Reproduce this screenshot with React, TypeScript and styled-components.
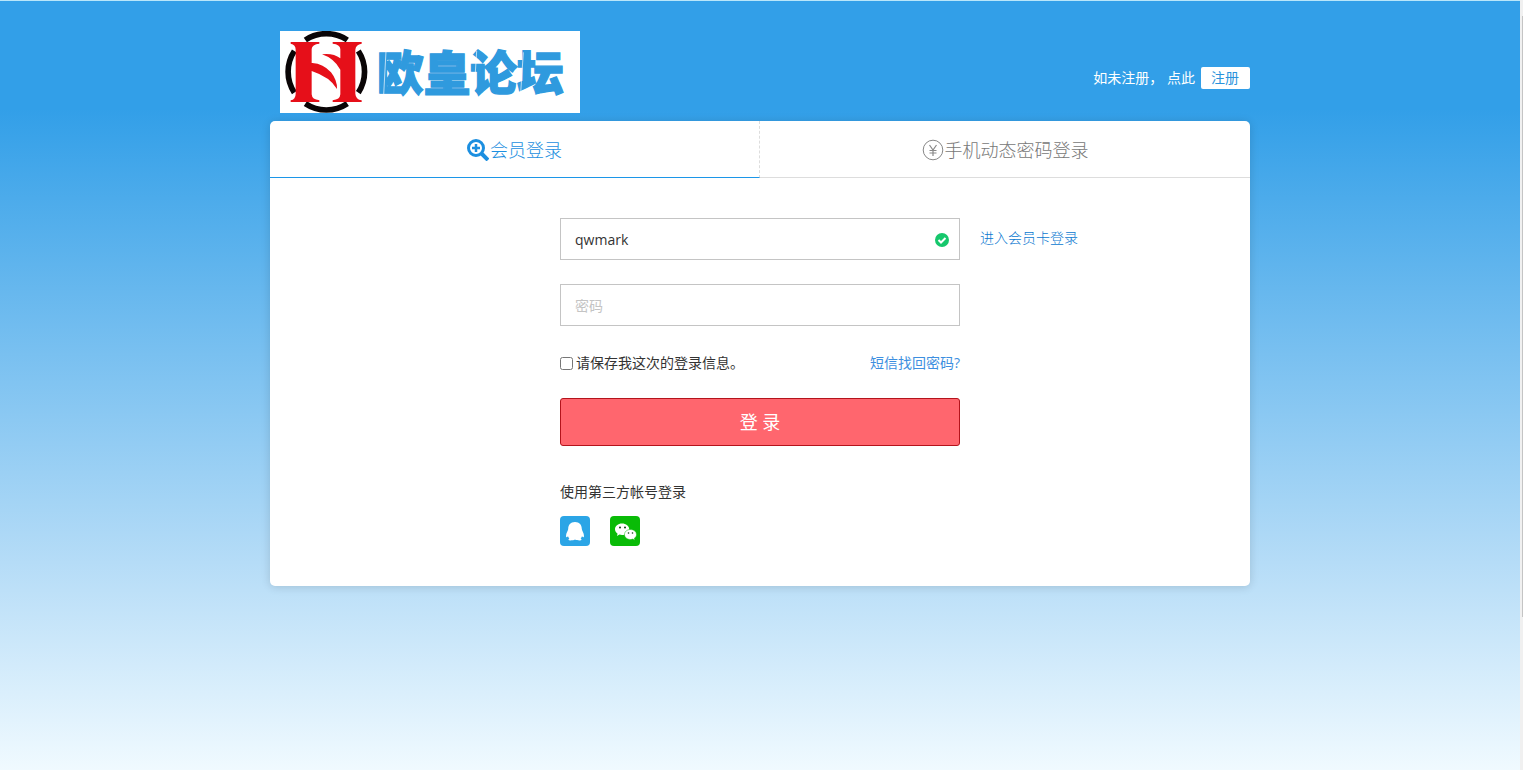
import React from "react";
import styled, { createGlobalStyle } from "styled-components";

const GlobalStyle = createGlobalStyle`
  *, *::before, *::after { box-sizing: border-box; }
  body {
    margin: 0;
    color: #333;
    font: 14px/20px "Open Sans", "Noto Sans CJK SC", sans-serif;
  }
  a { text-decoration: none; }
  input, button { font: inherit; }
`;

const Page = styled.div`
  display: flex;
  min-height: 100vh;
`;

const Backdrop = styled.main`
  flex: 1;
  min-width: 0;
  border-top: 1px solid #b9e6fa;
  background: linear-gradient(#329fe8 0%, #329fe8 14%, #b5dcf7 73%, #f0faff 100%);
`;

const ScrollRail = styled.div`
  width: 3px;
  padding: 16px 0 0 2px;
  background: #f0f0f0;
`;

const ScrollThumb = styled.div`
  height: 78vh;
  background: #c4c4c4;
`;

const Container = styled.div`
  max-width: 980px;
  margin: 0 auto;
`;

const Header = styled.header`
  display: flex;
  justify-content: space-between;
  align-items: center;
  padding: 30px 0 8px 10px;
`;

const Logo = styled.svg`
  display: block;
  width: 300px;
  height: 82px;
  background: #fff;
`;

const RegisterHint = styled.div`
  display: flex;
  align-items: center;
  gap: 6px;
  padding-top: 12px;
  color: #fff;
`;

const RegisterLink = styled.a`
  padding: 0 11px 0 10px;
  border-radius: 2px;
  background: #fff;
  color: #2a93dc;
  line-height: 22px;
`;

const Card = styled.section`
  border-radius: 5px;
  background: #fff;
  box-shadow: 0 1px 10px rgba(0, 0, 0, 0.14);
`;

const Tabs = styled.div`
  display: grid;
  grid-template-columns: 1fr 1fr;
`;

const Tab = styled.button<{ $active?: boolean }>`
  display: flex;
  justify-content: center;
  align-items: center;
  gap: 1px;
  height: 57px;
  padding: 2px 0 0;
  border: 0;
  border-right: ${(p) => (p.$active ? "1px dashed #ddd" : "0")};
  border-bottom: 1px solid ${(p) => (p.$active ? "#1c96e8" : "#ddd")};
  background: none;
  color: ${(p) => (p.$active ? "#1c8fe0" : "#777")};
  font-size: 18px;
  font-weight: 300;
  line-height: 24px;
`;

const Body = styled.div`
  display: grid;
  grid-template-columns: 1fr 400px 1fr;
  padding: 40px 0;
`;

const Form = styled.form`
  grid-column: 2;
  display: flex;
  flex-direction: column;
`;

const Field = styled.div`
  position: relative;
  margin-bottom: 24px;
`;

const TextInput = styled.input`
  display: block;
  width: 100%;
  height: 42px;
  padding: 0 40px 0 14px;
  border: 1px solid #c4c4c4;
  background: #fff;
  color: #333;
  outline: 0;
  &::placeholder { color: #c4c4c4; }
`;

const ValidMark = styled.svg`
  position: absolute;
  top: 15px;
  right: 11px;
`;

const CardLink = styled.a`
  justify-self: start;
  align-self: start;
  margin: 10px 0 0 20px;
  color: #0a78d0;
  font-weight: 300;
`;

const Options = styled.div`
  display: flex;
  justify-content: space-between;
  margin: 3px 0 25px;
`;

const Remember = styled.label`
  display: flex;
  align-items: center;
  gap: 3px;
`;

const Checkbox = styled.input`
  width: 13px;
  height: 13px;
  margin: 0;
`;

const ForgotLink = styled.a`
  color: #3d8fe0;
`;

const Submit = styled.button`
  height: 48px;
  border: 1px solid #b4141c;
  border-radius: 3px;
  background: #ff666e;
  color: #fff;
  font-size: 18px;
`;

const PartnerTitle = styled.div`
  margin: 36px 0 14px;
`;

const Partners = styled.div`
  display: flex;
  gap: 20px;
`;

const Partner = styled.a<{ $color: string }>`
  display: block;
  width: 30px;
  height: 30px;
  border-radius: 4px;
  background: ${(p) => p.$color};
  svg { display: block; }
`;

const SiteLogo = () => (
  <Logo viewBox="0 0 900 246" role="img" aria-label="欧皇论坛">
    <g fill="none" stroke="#0a0506" strokeWidth="17">
      <path d="M76 27A114 114 0 0 1 202 27" />
      <path d="M76 218A114 114 0 0 0 202 218" />
      <path d="M43 60A114 114 0 0 0 43 185" />
      <path d="M235 60A114 114 0 0 1 235 185" />
    </g>
    <g fill="#e60f19">
      <path d="M32 33H118V38Q96 40 95 54V106Q90 94 97 96Q130 98 153 124Q172 148 171 174Q150 138 95 120V190Q96 206 118 208V213H32V208Q47 205 47 188V56Q47 41 32 38Z" />
      <path d="M158 33H245V38Q227 41 226 56V188Q227 205 245 208V213H158V208Q180 206 181 190V116Q162 82 126 70Q160 66 181 82V54Q180 40 158 38Z" />
    </g>
    <text x="291" y="177" fill="#2f9ade" stroke="#2f9ade" strokeWidth="4" fontSize="140" fontWeight="900" fontFamily='"Noto Sans CJK SC", sans-serif'>欧皇论坛</text>
    <path d="M318 60L311 192M590 60L582 188M730 64L722 186" fill="none" stroke="#fff" strokeWidth="2" />
  </Logo>
);

const ZoomIcon = () => (
  <svg width="22" height="22" viewBox="0 0 22 22" fill="none" stroke="#1c8fe0" strokeWidth="3" aria-hidden="true">
    <circle cx="9" cy="9" r="7.500" />
    <path d="M14 14l7 7" strokeWidth="4" />
    <path d="M5 9h8M9 5v8" strokeWidth="2.500" />
  </svg>
);

const YenIcon = () => (
  <svg width="22" height="22" viewBox="0 0 22 22" fill="none" stroke="#888" aria-hidden="true">
    <circle cx="11" cy="11" r="9.8" />
    <path d="M7.5 6l3.500 5 3.500-5M11 11v6M7.500 11.500h7M7.500 14h7" strokeWidth="1.200" />
  </svg>
);

export default function App() {
  return (
    <>
      <GlobalStyle />
      <Page>
        <Backdrop>
          <Container>
            <Header>
              <SiteLogo />
              <RegisterHint>
                <span>如未注册， 点此</span>
                <RegisterLink href="#register">注册</RegisterLink>
              </RegisterHint>
            </Header>
            <Card>
              <Tabs>
                <Tab type="button" $active><ZoomIcon />会员登录</Tab>
                <Tab type="button"><YenIcon />手机动态密码登录</Tab>
              </Tabs>
              <Body>
                <Form>
                  <Field>
                    <TextInput type="text" defaultValue="qwmark" aria-label="用户名" />
                    <ValidMark width="14" height="14" viewBox="0 0 14 14" aria-hidden="true">
                      <circle cx="7" cy="7" r="7" fill="#16c76c" />
                      <path d="M3.500 7l2.500 2.500 4.500-4.500" fill="none" stroke="#fff" strokeWidth="2" />
                    </ValidMark>
                  </Field>
                  <Field>
                    <TextInput type="password" placeholder="密码" aria-label="密码" />
                  </Field>
                  <Options>
                    <Remember><Checkbox type="checkbox" />请保存我这次的登录信息。</Remember>
                    <ForgotLink href="#forgot">短信找回密码?</ForgotLink>
                  </Options>
                  <Submit type="button">登 录</Submit>
                  <PartnerTitle>使用第三方帐号登录</PartnerTitle>
                  <Partners>
                    <Partner href="#qq" $color="#2ba5e6" aria-label="QQ">
                      <svg width="30" height="30" viewBox="0 0 30 30" fill="#fff">
                        <path d="M15 6c-4.600 0-6.800 3-6.800 7 0 1.500-2.200 4-2.200 7 0 1.500.8 1.500 2 .3.300.9.700 1.500 1.400 2.100-1.400.7-1.300 2.100.9 2.100 1.900 0 3.600-.2 4.700-.9 1.100.7 2.800.9 4.700.9 2.200 0 2.300-1.400.9-2.100.7-.6 1.100-1.200 1.400-2.100 1.200 1.200 2 1.200 2-.3 0-3-2.200-5.500-2.200-7 0-4-2.200-7-6.800-7z" />
                      </svg>
                    </Partner>
                    <Partner href="#wechat" $color="#09bb07" aria-label="微信">
                      <svg width="30" height="30" viewBox="0 0 30 30">
                        <path d="M12 7.500c-4 0-7 2.500-7 5.700 0 1.800 1 3.400 2.600 4.500l-.7 2.300 2.600-1.400q1.200.4 2.500.4c4 0 7.200-2.600 7.200-5.800S16 7.500 12 7.500z" fill="#fff" />
                        <path d="M20.500 13.500c-3.500 0-6 2.200-6 5s2.500 5 6 5q1.200 0 2.200-.4l2.200 1.200-.6-2c1.400-.9 2.200-2.200 2.200-3.800 0-2.800-2.500-5-6-5z" fill="#fff" stroke="#09bb07" strokeWidth=".5" />
                        <g fill="#0a3f10"><circle cx="10" cy="11.500" r="1" /><circle cx="15" cy="11.500" r="1" /><circle cx="18.500" cy="17" r=".8" /><circle cx="22.500" cy="17" r=".8" /></g>
                      </svg>
                    </Partner>
                  </Partners>
                </Form>
                <CardLink href="#card">进入会员卡登录</CardLink>
              </Body>
            </Card>
          </Container>
        </Backdrop>
        <ScrollRail><ScrollThumb /></ScrollRail>
      </Page>
    </>
  );
}
